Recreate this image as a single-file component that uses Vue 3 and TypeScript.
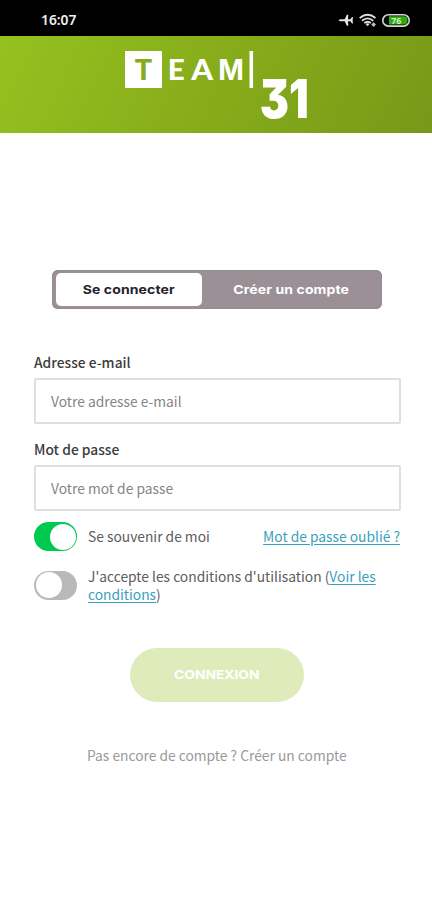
<script setup lang="ts">
import { ref } from 'vue'

const email = ref<string>('')
const password = ref<string>('')
const remember = ref<boolean>(true)
const accepted = ref<boolean>(false)
</script>

<template>
  <div class="screen">
    <div class="status">
      <span class="clock">16:07</span>
      <svg class="status-icons" width="74" height="18" viewBox="0 0 74 18">
        <path d="M0.3 9.3 L2.2 8.3 H6.7 L8.8 3.8 H10.3 L10 8.3 H12.3 L14 6 H15 L14.6 9.3 L15 12.6 H14 L12.3 10.3 H10 L10.3 14.8 H8.8 L6.7 10.3 H2.2Z" fill="#e4e4e4" />
        <g fill="none" stroke="#dedede" stroke-width="1.8">
          <path d="M21.7 7 Q29.6 0.5 37.5 7" />
          <path d="M24 9.7 Q29.6 5 35.2 9.7" />
          <path d="M26.3 12 Q29.6 9.4 32.9 12" />
        </g>
        <path d="M27.6 13 Q29.6 11.6 31.6 13 L29.6 15.2Z" fill="#dedede" />
        <path d="M35.6 11.2 L38 13.6 L35.6 16 L33.2 13.6Z" fill="#bbb" />
        <rect x="44.8" y="3.7" width="26.4" height="11.4" rx="5.7" fill="#050b04" stroke="#d4d8d3" stroke-width="1.6" />
        <path d="M51 5.3 H65.5 A4.1 4.1 0 0 1 65.5 13.5 H51Z" fill="#32a812" />
        <text x="53.2" y="12.6" class="battery" textLength="10" lengthAdjust="spacingAndGlyphs">76</text>
      </svg>
    </div>

    <header class="brand">
      <svg class="logo" width="200" height="83" viewBox="0 0 200 83">
        <rect x="1" y="1" width="37" height="37" fill="#fff" />
        <text x="10.8" y="29.5" class="mark green" textLength="17.4" lengthAdjust="spacingAndGlyphs">T</text>
        <text x="43.7" y="29.5" class="mark" textLength="17" lengthAdjust="spacingAndGlyphs">E</text>
        <text x="67.2" y="29.5" class="mark" textLength="21.8" lengthAdjust="spacingAndGlyphs">A</text>
        <text x="94.2" y="29.5" class="mark upright" textLength="25.6" lengthAdjust="spacingAndGlyphs">M</text>
        <rect x="125.5" y="1" width="3.6" height="37" fill="#fff" />
        <text x="135.8" y="67.8" class="number" textLength="49" lengthAdjust="spacingAndGlyphs">31</text>
      </svg>
    </header>

    <main>
      <nav class="tabs">
        <button class="tab active" type="button"><span class="wide">Se connecter</span></button>
        <button class="tab" type="button"><span class="wide">Créer un compte</span></button>
      </nav>

      <form @submit.prevent>
        <label class="field-label label-email" for="email">Adresse e-mail</label>
        <input id="email" v-model="email" class="field" type="email" placeholder="Votre adresse e-mail" />
        <label class="field-label label-password" for="password">Mot de passe</label>
        <input id="password" v-model="password" class="field" type="password" placeholder="Votre mot de passe" />

        <div class="option remember">
          <button class="toggle" :class="{ on: remember }" type="button" role="switch" :aria-checked="remember" @click="remember = !remember"><i></i></button>
          <span class="remember-text">Se souvenir de moi</span>
          <a class="link forgot">Mot de passe oublié ?</a>
        </div>
        <div class="option terms">
          <button class="toggle" :class="{ on: accepted }" type="button" role="switch" :aria-checked="accepted" @click="accepted = !accepted"><i></i></button>
          <div class="terms-text">
            <div class="line"><span>J'accepte les conditions d'utilisation (</span><a class="link">Voir les</a></div>
            <div class="line"><a class="link">conditions</a><span>)</span></div>
          </div>
        </div>
        <button class="submit" type="submit"><span class="wide">CONNEXION</span></button>
      </form>
      <p class="signup">Pas encore de compte ? Créer un compte</p>
    </main>
  </div>
</template>

<style>
body {
  margin: 0;
  background: #fff;
}
</style>

<style scoped>
.screen {
  width: 432px;
  height: 900px;
  overflow: hidden;
  box-sizing: border-box;
  background: #fff;
  color: #5c5c5c;
  font-family: "Noto Sans CJK SC", "Noto Sans", sans-serif;
  font-size: 13.8px;
}
.status {
  height: 36px;
  box-sizing: border-box;
  padding: 3px 20px 0 41px;
  display: flex;
  align-items: center;
  justify-content: space-between;
  background: #000;
}
.clock {
  color: #f0f0f0;
  font: 600 13.8px/18px "Noto Sans", sans-serif;
}
.battery {
  fill: #d5f5cb;
  font: 700 9px "Noto Sans", sans-serif;
}
.brand {
  height: 97px;
  box-sizing: border-box;
  padding: 14px 0 0 124px;
  background: linear-gradient(115deg, #95c11f 0%, #86ac1a 50%, #789818 100%);
}
.logo {
  display: block;
}
.mark {
  fill: #fff;
  font: 900 28.5px Lato, sans-serif;
}
.mark.green {
  fill: #86ac1c;
}
.mark.upright {
  font: 700 28px Inter, sans-serif;
}
.number {
  fill: #fff;
  font: 900 53.5px Inter, sans-serif;
  font-feature-settings: "cv09";
}
main {
  padding: 137px 31px 0 34px;
}
button {
  padding: 0;
  border: 0;
}
.tabs {
  width: 330px;
  height: 39px;
  margin-left: 18px;
  padding: 3px 4px;
  display: flex;
  box-sizing: border-box;
  border-radius: 6px;
  background: #9a9096;
  box-shadow: inset 0 0 0 1px #938c90;
}
.tab {
  flex: 1;
  background: none;
  color: #fff;
  font: 700 12.4px/32px Inter, sans-serif;
  letter-spacing: 0.1px;
}
.tab:last-child {
  padding-left: 3px;
}
.wide {
  display: inline-block;
  transform: scaleX(1.13);
}
.tab.active {
  flex: 0 0 146px;
  border-radius: 5px;
  background: #fff;
  color: #24242c;
}
.field-label {
  display: block;
  height: 20px;
  color: #3c3c3c;
  font-weight: 500;
  line-height: 20px;
}
.label-email {
  margin-top: 43px;
  margin-bottom: 6px;
}
.label-password {
  margin-top: 15px;
  margin-bottom: 6px;
}
.field {
  display: block;
  width: 367px;
  height: 46px;
  box-sizing: border-box;
  padding: 0 15px;
  border: 2px solid #dfdfdf;
  border-radius: 2px;
  outline: 0;
  background: #fff;
  color: #555;
  font-family: inherit;
  font-size: 13.8px;
}
.field::placeholder {
  color: #858585;
  opacity: 1;
}
.option {
  display: flex;
  align-items: center;
  gap: 11px;
}
.remember {
  height: 29px;
  margin-top: 11px;
  line-height: 20px;
}
.remember-text,
.forgot {
  padding-bottom: 2px;
}
.forgot {
  margin-left: auto;
  margin-right: 1px;
}
.link {
  color: #3a9fbd;
  text-decoration: underline;
  text-underline-offset: 2px;
  text-decoration-thickness: 1px;
}
.terms {
  height: 36px;
  margin-top: 16px;
}
.line {
  display: flex;
  height: 18px;
  line-height: 18px;
  white-space: nowrap;
}
.toggle {
  flex: 0 0 43px;
  width: 43px;
  height: 29px;
  padding: 1.5px;
  display: flex;
  box-sizing: border-box;
  border-radius: 15px;
  background: #b9b9b9;
}
.toggle.on {
  justify-content: flex-end;
  background: #00c950;
}
.toggle i {
  width: 26px;
  height: 26px;
  border-radius: 50%;
  background: #fff;
}
.submit {
  display: block;
  width: 174px;
  height: 54px;
  margin: 45px 0 0 96px;
  border-radius: 27px;
  background: #dfebba;
  color: #fff;
  font: 700 12.2px/54px Inter, sans-serif;
}
.signup {
  margin: 43px 0 0 53px;
  color: #999;
  line-height: 20px;
  white-space: nowrap;
}
</style>
